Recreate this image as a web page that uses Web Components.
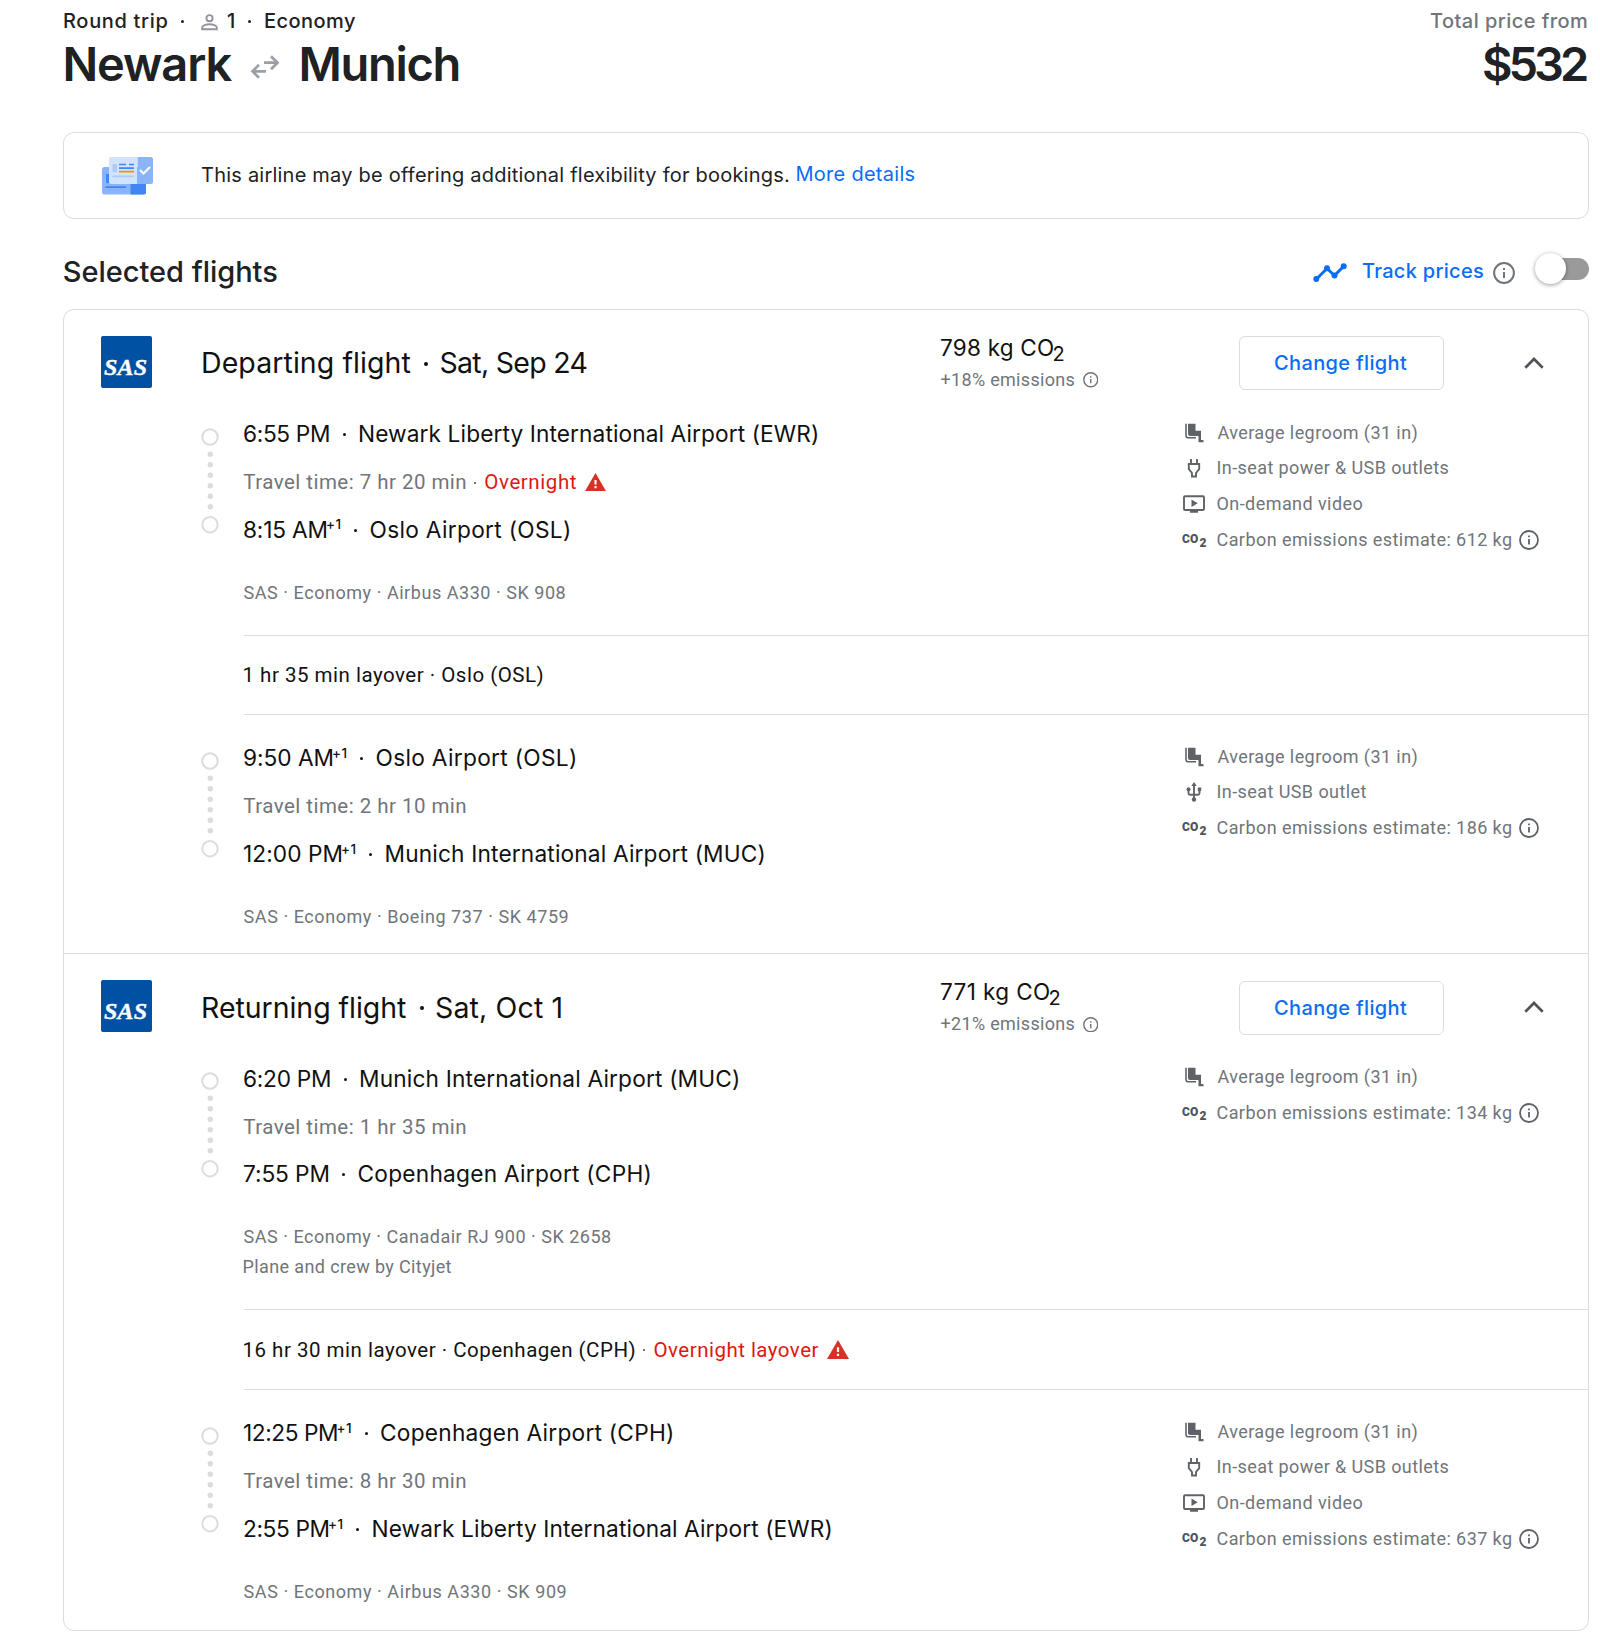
<!DOCTYPE html>
<html lang="en">
<head>
<meta charset="utf-8">
<title>Newark to Munich</title>
<style>
    body {
        margin: 0;
        background: #fff;
        color: #202124;
        font-family: Inter, "Open Sans", sans-serif;
    }
</style>
</head>
<body>
<trip-page></trip-page>

<script>
const ICONS = {
    person: ['0 0 17 17', `<g fill="none" stroke="#8f959b" stroke-width="1.9"><circle cx="8.5" cy="4.2" r="3.1"/><path d="M1.2 15.2v-1.6c0-2.2 4-3.4 7.3-3.4s7.3 1.2 7.3 3.4v1.6z"/></g>`],
    swap: ['0 0 30 24', `<g fill="none" stroke="#9aa0a6" stroke-width="2.7"><path d="M14 7.7h13.500M21 1.200l6.500 6.500-6.500 6.500M16 16.300H2.500M9 9.800l-6.500 6.500 6.500 6.500"/></g>`],
    tickets: ['0 0 51 38', `<rect y="10" width="44" height="27.500" rx="2.500" fill="#8ab4f8"/><path d="M28.500 27H44v8a2.500 2.500 0 0 1-2.500 2.500h-13z" fill="#4285f4"/><path d="M4 17h3v9H4zM3.500 29.300H24v1.700H3.500z" fill="#4285f4"/><path d="M9.500 0H35v27H9.500A2.500 2.500 0 0 1 7 24.500v-22A2.500 2.500 0 0 1 9.500 0z" fill="#d2e3fc"/><path d="M35.500 0h13A2.500 2.500 0 0 1 51 2.500v22a2.500 2.500 0 0 1-2.500 2.500h-13z" fill="#8ab4f8"/><path d="M10.500 7h4.500v8h-4.500zM10.500 18.500H32v1.700H10.500z" fill="#aecbfa"/><path d="M17 6.700h7v1.600h-7zM27 6.700h5v1.600h-5zM17 10.300h15v1.600H17z" fill="#4285f4"/><path d="M17 13.700h15v1.800H17z" fill="#f29900"/><path d="M38 13l3.500 3.500 6.500-6.500" fill="none" stroke="#fff" stroke-width="2"/>`],
    trend: ['0 0 34 20', `<path d="M3.500 16L14 5.500l7.500 7L30.500 3.500" fill="none" stroke="#0b6cf5" stroke-width="3"/><g fill="#0b6cf5"><circle cx="3.300" cy="16" r="3"/><circle cx="14" cy="5.300" r="3"/><circle cx="21.500" cy="12.500" r="3"/><circle cx="30.700" cy="3.300" r="3"/></g>`],
    info: ['0 0 22 22', `<circle cx="11" cy="11" r="9.900" fill="none" stroke="currentColor" stroke-width="2"/><path d="M10 10h2v6h-2zM10 6h2v2h-2z" fill="currentColor"/>`],
    warning: ['0 0 22 19', `<path d="M11 0l11 19H0z" fill="#d93025"/><path d="M9.900 7.300h2.200v4.700H9.900zM9.900 13.700h2.200v2.200H9.900z" fill="#fff"/>`],
    chevron: ['0 0 20 12', `<path d="M1.300 10.700L10 2l8.700 8.700" fill="none" stroke="#50545a" stroke-width="2.700"/>`],
    timeline: ['0 0 18 106', `<g fill="none" stroke="#dadce0" stroke-width="2"><circle cx="9" cy="9" r="7.700"/><circle cx="9" cy="96.700" r="7.700"/></g><g fill="#dadce0"><circle cx="9.300" cy="26.300" r="2.700"/><circle cx="9.300" cy="36.800" r="2.700"/><circle cx="9.300" cy="47.300" r="2.700"/><circle cx="9.300" cy="57.800" r="2.700"/><circle cx="9.300" cy="68.300" r="2.700"/><circle cx="9.300" cy="78.800" r="2.700"/></g>`],
    seat: ['0 0 24 20', `<path d="M6 .8h7.500v7H19v9.200h2.500v2.300h-5V13H8a2 2 0 0 1-2-2z" fill="#5f6368"/><path d="M4 .8v11.700a2.300 2.300 0 0 0 2.300 2.300H14" fill="none" stroke="#5f6368" stroke-width="1.600"/>`],
    plug: ['0 0 24 20', `<path d="M9 1v5M15 1v5M6.800 6h10.400v5.200L14 15v3.500h-4V15l-3.200-3.800z" fill="none" stroke="#5f6368" stroke-width="1.900"/>`],
    usb: ['0 0 24 20', `<path d="M12 3v14M6.500 7v4.200c0 1 .6 1.500 1.500 1.500h8c.9 0 1.500-.5 1.500-1.500V7" fill="none" stroke="#5f6368" stroke-width="1.900"/><path d="M12 0l2.700 4H9.300zM15.800 5.500h3.400v3.400h-3.400z" fill="#5f6368"/><circle cx="6.500" cy="7.200" r="2" fill="#5f6368"/><circle cx="12" cy="17.500" r="2.200" fill="#5f6368"/>`],
    video: ['0 0 24 20', `<rect x="2" y="2.200" width="20" height="13.800" rx="1" fill="none" stroke="#5f6368" stroke-width="1.900"/><path d="M9.500 5.500l6.200 3.700-6.200 3.700zM8 16h8v2.800H8z" fill="#5f6368"/>`]
};

class TripIcon extends HTMLElement {
    constructor() {
        super();
        this.attachShadow({ mode: 'open' });
    }

    connectedCallback() {
        const [viewBox, body] = ICONS[this.getAttribute('name')];
        const [, , width, height] = viewBox.split(' ');
        const w = this.getAttribute('w') || width;
        const h = w * height / width;
        this.shadowRoot.innerHTML = `
            <style>
                :host { display: inline-block; flex: none; width: ${w}px; height: ${h}px; }
                svg { display: block; width: 100%; height: 100%; }
            </style>
            <svg viewBox="${viewBox}">${body}</svg>
        `;
    }
}

// One line of text, tracked so that its ink fills the width in "w".
class FitText extends HTMLElement {
    constructor() {
        super();
        this.attachShadow({ mode: 'open' });
    }

    connectedCallback() {
        const text = this.textContent;
        const width = Number(this.getAttribute('w'));
        const style = getComputedStyle(this);
        const ctx = document.createElement('canvas').getContext('2d');
        ctx.font = `${style.fontWeight} ${style.fontSize} ${style.fontFamily}`;
        const box = ctx.measureText(text);
        const ink = box.actualBoundingBoxLeft + box.actualBoundingBoxRight;
        const spacing = text.length > 1 ? (width - ink) / (text.length - 1) : 0;
        this.shadowRoot.innerHTML = `
            <style>
                :host {
                    display: inline-block;
                    flex: none;
                    width: ${width}px;
                    white-space: nowrap;
                    letter-spacing: ${spacing.toFixed(3)}px;
                    text-indent: ${box.actualBoundingBoxLeft.toFixed(2)}px;
                }
            </style>
            <slot></slot>
        `;
    }
}

class TripHeader extends HTMLElement {
    constructor() {
        super();
        this.attachShadow({ mode: 'open' });
    }

    connectedCallback() {
        this.shadowRoot.innerHTML = `
            <style>
                :host { display: flex; justify-content: space-between; padding: 7px 2px 0 1px; box-sizing: border-box; font-weight: 500; }
                .meta { display: flex; align-items: center; font-size: 20px; line-height: 28px; height: 28px; }
                .cities { display: flex; align-items: center; font-size: 47px; line-height: 56px; height: 56px; margin-top: 1px; padding-left: 1.500px; font-weight: 600; }
                .dot { width: 3px; height: 3px; border-radius: 50%; background: #202124; margin-top: 1px; }
                .price { display: flex; flex-direction: column; align-items: flex-end; }
                .price .meta { color: #70757a; }
            </style>
            <div>
                <div class="meta">
                    <fit-text w="103.500">Round trip</fit-text>
                    <span class="dot" style="margin-left:13px"></span>
                    <trip-icon name="person" style="margin:2px 9.500px 0 17px"></trip-icon>
                    <fit-text w="7">1</fit-text>
                    <span class="dot" style="margin:1px 14px 0 14px"></span>
                    <fit-text w="91">Economy</fit-text>
                </div>
                <div class="cities">
                    <fit-text w="167">Newark</fit-text>
                    <trip-icon name="swap" style="margin:5px 22px 0 17px"></trip-icon>
                    <fit-text w="157">Munich</fit-text>
                </div>
            </div>
            <div class="price">
                <div class="meta"><fit-text w="157">Total price from</fit-text></div>
                <div class="cities"><fit-text w="103">$532</fit-text></div>
            </div>
        `;
    }
}

class FlexBanner extends HTMLElement {
    constructor() {
        super();
        this.attachShadow({ mode: 'open' });
    }

    connectedCallback() {
        this.shadowRoot.innerHTML = `
            <style>
                :host { display: flex; align-items: center; box-sizing: border-box; height: 87px; padding-left: 38px; border: 1px solid #dadce0; border-radius: 11px; font-size: 20px; line-height: 28px; }
                trip-icon { margin-right: 48px; }
                fit-text { margin-top: -2px; }
                a { color: #0b6cf5; margin: -3px 0 0 7.500px; }
            </style>
            <trip-icon name="tickets"></trip-icon>
            <fit-text w="588">This airline may be offering additional flexibility for bookings.</fit-text>
            <a><fit-text w="118">More details</fit-text></a>
        `;
    }
}

class TrackToggle extends HTMLElement {
    constructor() {
        super();
        this.attachShadow({ mode: 'open' });
    }

    connectedCallback() {
        this.shadowRoot.innerHTML = `
            <style>
                :host { display: flex; align-items: center; margin-top: -2px; font-size: 20px; line-height: 28px; font-weight: 500; color: #0b6cf5; }
                .info { color: #70757a; margin: 3px 20px 0 10px; }
                .switch { display: flex; align-items: center; width: 54px; height: 22px; margin-top: -5px; background: linear-gradient(#9a9a9a, #9a9a9a) right / 46px 100% no-repeat; border-radius: 11px; }
                .knob { flex: none; width: 31px; height: 31px; border-radius: 50%; background: #fff; box-shadow: 0 1px 4px rgba(0, 0, 0, .4); }
            </style>
            <trip-icon name="trend" style="margin:4px 15px 0 0"></trip-icon>
            <fit-text w="121">Track prices</fit-text>
            <trip-icon class="info" name="info"></trip-icon>
            <span class="switch"><span class="knob"></span></span>
        `;
    }
}

class FlightSection extends HTMLElement {
    constructor() {
        super();
        this.attachShadow({ mode: 'open' });
    }

    connectedCallback() {
        const at = (name) => this.getAttribute(name);
        this.shadowRoot.innerHTML = `
            <style>
                :host { display: block; }
                header { display: grid; grid-template-columns: 102px 738px 297.500px 285px auto; align-items: start; height: 101px; padding-left: 37px; }
                .logo { display: flex; justify-content: center; width: 51px; height: 52px; margin-top: 26px; background: #0051a3; border-radius: 2px; color: #fff; font: bold italic 24px/52px "Liberation Serif", serif; -webkit-text-stroke: .4px #fff; }
                .logo fit-text { margin-top: 5px; }
                .title { display: flex; align-items: center; font-size: 28.500px; line-height: 40px; margin-top: 33.500px; color: #111; }
                .title i { width: 4px; height: 4px; border-radius: 50%; background: #111; margin: 1px 12.500px 0 13.500px; }
                .co2 { margin-top: 23px; font-size: 22.500px; line-height: 30px; height: 30px; color: #111; display: flex; }
                .co2 small { font-size: 20px; margin: 6px 0 0 -.5px; }
                .diff { display: flex; align-items: center; gap: 8px; margin: 4px 0 0 -.5px; color: #70757a; font: 18px/26px Roboto, sans-serif; }
                .button { display: flex; align-items: center; justify-content: center; box-sizing: border-box; width: 205px; height: 54px; margin-top: 26.500px; border: 1px solid #dadce0; border-radius: 6px; color: #0b6cf5; font-size: 20px; font-weight: 500; }
                .chevron { margin-top: 47px; }
            </style>
            <header>
                <span class="logo"><fit-text w="43">SAS</fit-text></span>
                <span class="title"><fit-text w="${at('heading-w')}">${at('heading')}</fit-text><i></i><fit-text w="${at('date-w')}">${at('date')}</fit-text></span>
                <div>
                    <div class="co2"><fit-text w="${at('co2-w')}">${at('co2')} kg CO</fit-text><small>2</small></div>
                    <div class="diff"><fit-text w="134">${at('diff')} emissions</fit-text><trip-icon name="info" w="15.500"></trip-icon></div>
                </div>
                <span class="button"><fit-text w="132">Change flight</fit-text></span>
                <trip-icon class="chevron" name="chevron"></trip-icon>
            </header>
            <slot></slot>
        `;
    }
}

class FlightLeg extends HTMLElement {
    constructor() {
        super();
        this.attachShadow({ mode: 'open' });
    }

    stop(name) {
        const [time, timeW, next, place, placeW] = this.getAttribute(name).split('|');
        return `
            <div class="stop">
                <fit-text w="${timeW}">${time}</fit-text>${next ? '<sup><fit-text w="13.500">+1</fit-text></sup>' : ''}
                <span class="dot"></span>
                <fit-text w="${placeW}">${place}</fit-text>
            </div>
        `;
    }

    connectedCallback() {
        const overnight = this.hasAttribute('overnight');
        this.shadowRoot.innerHTML = `
            <style>
                :host { display: grid; grid-template-columns: 43px 938px auto; align-items: start; padding: var(--leg-top, 28px) 0 var(--leg-bottom, 21.200px) 137px; }
                .line { margin-top: 8.700px; }
                .stop { display: flex; align-items: center; height: 30px; font-size: 22.700px; line-height: 30px; color: #111; }
                .dot { width: 3px; height: 3px; border-radius: 50%; background: #111; margin: 1px 13.500px 0; }
                .travel { display: flex; align-items: center; height: 30px; margin: 17.800px 0 17.900px -.7px; color: #70757a; font: 20.500px/30px Roboto, sans-serif; }
                .travel i { width: 2px; height: 2px; background: #70757a; margin: 1px 9px 0; }
                .warn { color: #e0180e; margin-right: 9px; }
                sup { font-size: 13.500px; font-weight: 500; line-height: 16px; height: 16px; vertical-align: 0; margin: -11px 0 0 .5px; }
                .ops { margin: 33px 0 0 -.4px; color: #70757a; font: 18px/30px Roboto, sans-serif; }
                .ops ::slotted(fit-text) { display: block; }
            </style>
            <trip-icon class="line" name="timeline"></trip-icon>
            <div>
                ${this.stop('from')}
                <div class="travel">
                    <fit-text w="222">Travel time: ${this.getAttribute('time')}</fit-text>
                    ${overnight ? '<i></i><fit-text class="warn" w="90.500">Overnight</fit-text><trip-icon name="warning" w="21"></trip-icon>' : ''}
                </div>
                ${this.stop('to')}
                <div class="ops"><slot></slot></div>
            </div>
            <slot name="amenities"></slot>
        `;
    }
}

class LegAmenity extends HTMLElement {
    constructor() {
        super();
        this.attachShadow({ mode: 'open' });
    }

    connectedCallback() {
        const icon = this.getAttribute('icon');
        const carbon = icon === 'carbon';
        this.shadowRoot.innerHTML = `
            <style>
                :host { display: flex; align-items: center; height: 35.800px; color: #70757a; font: 18px/26px Roboto, sans-serif; }
                .icon { flex: none; width: 24px; margin-right: 11.500px; }
                .co { display: flex; color: #50545a; font: 900 12px/18px Roboto, sans-serif; }
                .co fit-text { margin-top: 2px; }
                .co small { font-size: 12px; margin: 6px 0 0 1.500px; }
                .info { color: #5f6368; margin-left: 8px; }
            </style>
            ${carbon
                ? '<span class="icon co"><fit-text w="16">CO</fit-text><small>2</small></span>'
                : `<trip-icon class="icon" name="${icon}"></trip-icon>`}
            <fit-text w="${this.getAttribute('w')}">${this.textContent}</fit-text>
            ${carbon ? '<trip-icon class="info" name="info" w="20"></trip-icon>' : ''}
        `;
    }
}

class LayoverRow extends HTMLElement {
    constructor() {
        super();
        this.attachShadow({ mode: 'open' });
    }

    connectedCallback() {
        const warning = this.getAttribute('warning');
        this.shadowRoot.innerHTML = `
            <style>
                :host { display: flex; align-items: center; box-sizing: border-box; height: 80.400px; margin-left: 179.500px; border: solid #dadce0; border-width: 1px 0; color: #111; font: 20.500px/30px Roboto, sans-serif; }
                i { width: 2px; height: 2px; background: #70757a; margin: 1px 9.500px 0 8.500px; }
                .warn { color: #e0180e; margin-right: 8px; }
            </style>
            <fit-text w="${this.getAttribute('w')}">${this.textContent}</fit-text>
            ${warning ? `<i></i><fit-text class="warn" w="164">${warning}</fit-text><trip-icon name="warning"></trip-icon>` : ''}
        `;
    }
}

class TripPage extends HTMLElement {
    constructor() {
        super();
        this.attachShadow({ mode: 'open' });
    }

    connectedCallback() {
        this.shadowRoot.innerHTML = `
            <style>
                :host { display: block; box-sizing: border-box; width: 1600px; height: 1644px; padding: 0 11px 0 63px; overflow: hidden; }
                trip-header { height: 132px; }
                .bar { display: flex; justify-content: space-between; height: 40px; margin: 33px 0 16.800px; padding-left: .7px; font-size: 29px; font-weight: 500; line-height: 40px; }
                .card { border: 1px solid #dadce0; border-radius: 11px; box-sizing: border-box; height: 1322px; }
                flight-section + flight-section { border-top: 1px solid #dadce0; }
                .first { --leg-top: 8.500px; --leg-bottom: 27px; }
                ul { margin: -4.700px 0 0; padding: 0; }
            </style>
            <trip-header></trip-header>
            <flex-banner></flex-banner>
            <div class="bar">
                <fit-text w="213.500">Selected flights</fit-text>
                <track-toggle></track-toggle>
            </div>
            <div class="card">
                <flight-section heading="Departing flight" heading-w="207.500" date="Sat, Sep 24" date-w="146" co2="798" co2-w="112" diff="+18%">
                    <flight-leg class="first" overnight time="7 hr 20 min"
                        from="6:55 PM|85||Newark Liberty International Airport (EWR)|458"
                        to="8:15 AM|82.500|1|Oslo Airport (OSL)|198.500">
                        <fit-text w="322">SAS · Economy · Airbus A330 · SK 908</fit-text>
                        <ul slot="amenities">
                            <leg-amenity icon="seat" w="199">Average legroom (31 in)</leg-amenity>
                            <leg-amenity icon="plug" w="231">In-seat power &amp; USB outlets</leg-amenity>
                            <leg-amenity icon="video" w="145">On-demand video</leg-amenity>
                            <leg-amenity icon="carbon" w="293.500">Carbon emissions estimate: 612 kg</leg-amenity>
                        </ul>
                    </flight-leg>
                    <layover-row w="299">1 hr 35 min layover · Oslo (OSL)</layover-row>
                    <flight-leg time="2 hr 10 min"
                        from="9:50 AM|88.500|1|Oslo Airport (OSL)|198.500"
                        to="12:00 PM|97.500|1|Munich International Airport (MUC)|378">
                        <fit-text w="324">SAS · Economy · Boeing 737 · SK 4759</fit-text>
                        <ul slot="amenities">
                            <leg-amenity icon="seat" w="199">Average legroom (31 in)</leg-amenity>
                            <leg-amenity icon="usb" w="149">In-seat USB outlet</leg-amenity>
                            <leg-amenity icon="carbon" w="293.500">Carbon emissions estimate: 186 kg</leg-amenity>
                        </ul>
                    </flight-leg>
                </flight-section>
                <flight-section heading="Returning flight" heading-w="203" date="Sat, Oct 1" date-w="125.500" co2="771" co2-w="108" diff="+21%">
                    <flight-leg class="first" time="1 hr 35 min"
                        from="6:20 PM|86||Munich International Airport (MUC)|378"
                        to="7:55 PM|84.500||Copenhagen Airport (CPH)|291">
                        <fit-text w="367.500">SAS · Economy · Canadair RJ 900 · SK 2658</fit-text>
                        <fit-text w="208">Plane and crew by Cityjet</fit-text>
                        <ul slot="amenities">
                            <leg-amenity icon="seat" w="199">Average legroom (31 in)</leg-amenity>
                            <leg-amenity icon="carbon" w="293.500">Carbon emissions estimate: 134 kg</leg-amenity>
                        </ul>
                    </flight-leg>
                    <layover-row w="391" warning="Overnight layover">16 hr 30 min layover · Copenhagen (CPH)</layover-row>
                    <flight-leg style="--leg-top: 28.500px" time="8 hr 30 min"
                        from="12:25 PM|93|1|Copenhagen Airport (CPH)|291"
                        to="2:55 PM|84.500|1|Newark Liberty International Airport (EWR)|458">
                        <fit-text w="322">SAS · Economy · Airbus A330 · SK 909</fit-text>
                        <ul slot="amenities">
                            <leg-amenity icon="seat" w="199">Average legroom (31 in)</leg-amenity>
                            <leg-amenity icon="plug" w="231">In-seat power &amp; USB outlets</leg-amenity>
                            <leg-amenity icon="video" w="145">On-demand video</leg-amenity>
                            <leg-amenity icon="carbon" w="293.500">Carbon emissions estimate: 637 kg</leg-amenity>
                        </ul>
                    </flight-leg>
                </flight-section>
            </div>
        `;
    }
}

customElements.define('trip-icon', TripIcon);
customElements.define('fit-text', FitText);
customElements.define('trip-header', TripHeader);
customElements.define('flex-banner', FlexBanner);
customElements.define('track-toggle', TrackToggle);
customElements.define('flight-section', FlightSection);
customElements.define('flight-leg', FlightLeg);
customElements.define('leg-amenity', LegAmenity);
customElements.define('layover-row', LayoverRow);
customElements.define('trip-page', TripPage);
</script>
</body>
</html>
